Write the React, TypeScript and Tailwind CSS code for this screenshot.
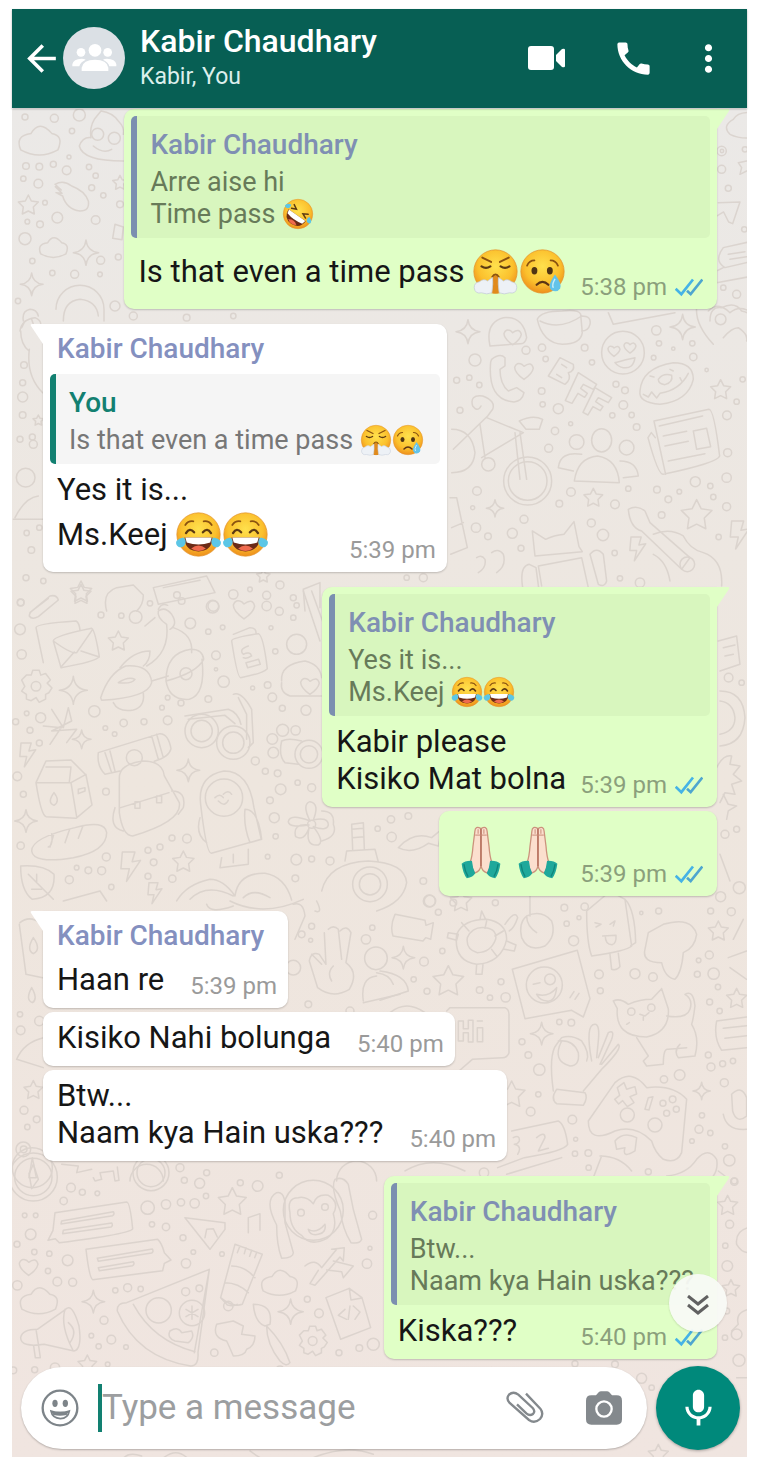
// src/App.tsx
import { ReactNode } from 'react';
import { MdArrowBack, MdCall, MdMic, MdMoreVert } from 'react-icons/md';

type EmojiName = 'rofl' | 'triumph' | 'cry' | 'joy';
type Point = [number, number, number];

interface Line {
  text: string;
  emojis?: EmojiName[];
}

interface Message {
  id: number;
  mine: boolean;
  tail?: boolean;
  sender?: string;
  quote?: { author: string; lines: Line[] };
  lines?: Line[];
  hands?: boolean;
  time: string;
}

const messages: Message[] = [
  {
    id: 1,
    mine: true,
    tail: true,
    quote: {
      author: 'Kabir Chaudhary',
      lines: [{ text: 'Arre aise hi' }, { text: 'Time pass', emojis: ['rofl'] }],
    },
    lines: [{ text: 'Is that even a time pass', emojis: ['triumph', 'cry'] }],
    time: '5:38 pm',
  },
  {
    id: 2,
    mine: false,
    tail: true,
    sender: 'Kabir Chaudhary',
    quote: {
      author: 'You',
      lines: [{ text: 'Is that even a time pass', emojis: ['triumph', 'cry'] }],
    },
    lines: [{ text: 'Yes it is...' }, { text: 'Ms.Keej', emojis: ['joy', 'joy'] }],
    time: '5:39 pm',
  },
  {
    id: 3,
    mine: true,
    tail: true,
    quote: {
      author: 'Kabir Chaudhary',
      lines: [{ text: 'Yes it is...' }, { text: 'Ms.Keej', emojis: ['joy', 'joy'] }],
    },
    lines: [{ text: 'Kabir please' }, { text: 'Kisiko Mat bolna' }],
    time: '5:39 pm',
  },
  { id: 4, mine: true, hands: true, time: '5:39 pm' },
  {
    id: 5,
    mine: false,
    tail: true,
    sender: 'Kabir Chaudhary',
    lines: [{ text: 'Haan re' }],
    time: '5:39 pm',
  },
  { id: 6, mine: false, lines: [{ text: 'Kisiko Nahi bolunga' }], time: '5:40 pm' },
  {
    id: 7,
    mine: false,
    lines: [{ text: 'Btw...' }, { text: 'Naam kya Hain uska???' }],
    time: '5:40 pm',
  },
  {
    id: 8,
    mine: true,
    tail: true,
    quote: {
      author: 'Kabir Chaudhary',
      lines: [{ text: 'Btw...' }, { text: 'Naam kya Hain uska???' }],
    },
    lines: [{ text: 'Kiska???' }],
    time: '5:40 pm',
  },
];

/* ---------- Emoji ---------- */

function JoyFeatures() {
  return (
    <>
      <path d="M14 19q4-6 11-5M50 19q-4-6-11-5" fill="none" stroke="#8a5210" strokeWidth="2.4" strokeLinecap="round" />
      <path d="M15 30q5-8 11-1M38 29q6-7 11 1" fill="none" stroke="#5d3a12" strokeWidth="3.2" strokeLinecap="round" />
      <path d="M13 36h38q0 18-19 19-19-1-19-19z" fill="#6b2a16" />
      <path d="M14 36h36l-2 7q-16 5-32 0z" fill="#fff" />
      <path d="M22 51q10-8 20 0-10 7-20 0z" fill="#ef6a4e" />
      <path d="M11 36q5 2 3 9-3 6-9 4-5-3-3-8 3-4 9-5zM53 36q-5 2-3 9 3 6 9 4 5-3 3-8-3-4-9-5z" fill="#5cc6e6" />
    </>
  );
}

function Emoji({ name, className }: { name: EmojiName; className: string }) {
  return (
    <svg viewBox="0 0 64 64" role="img" aria-label={name} className={className}>
      <defs>
        <radialGradient id="face" cx="50%" cy="38%" r="62%">
          <stop offset="0" stopColor="#ffe14d" />
          <stop offset="0.65" stopColor="#fbc02d" />
          <stop offset="1" stopColor="#ee8f1c" />
        </radialGradient>
      </defs>
      <circle cx="32" cy="32" r="29.5" fill="url(#face)" stroke="#e2932c" strokeWidth="1" />
      {name === 'joy' && <JoyFeatures />}
      {name === 'rofl' && (
        <g transform="rotate(35 32 32)">
          <path d="M15 21l9 5-9 4M49 21l-9 5 9 4" fill="none" stroke="#5d3a12" strokeWidth="3" strokeLinecap="round" />
          <path d="M11 35h42q-1 20-21 21-20-1-21-21z" fill="#6b2a16" />
          <path d="M12 35h40l-2 8q-18 5-36 0z" fill="#fff" />
          <path d="M22 52q10-8 20 0-10 7-20 0z" fill="#ef6a4e" />
          <path d="M10 24q3 6-1 10-5 3-8-1-1-6 9-9zM54 24q-3 6 1 10 5 3 8-1 1-6-9-9z" fill="#5cc6e6" />
        </g>
      )}
      {name === 'cry' && (
        <>
          <path d="M11 24q3-7 10-7M53 24q-3-7-10-7" fill="none" stroke="#8a5210" strokeWidth="2.4" strokeLinecap="round" />
          <ellipse cx="21" cy="31" rx="4" ry="5" fill="#4f3414" />
          <ellipse cx="42" cy="31" rx="4" ry="5" fill="#4f3414" />
          <path d="M24 50q8-8 16 0" fill="none" stroke="#5d3414" strokeWidth="3" strokeLinecap="round" />
          <path d="M49 36q10 13 7 19-4 6-11 3-8-5 4-22z" fill="#63c3ea" />
          <path d="M49 42q-5 9-2 12" fill="none" stroke="#c6edfa" strokeWidth="2" />
        </>
      )}
      {name === 'triumph' && (
        <>
          <path d="M14 13l12 6M50 13l-12 6" stroke="#8a5210" strokeWidth="2.6" strokeLinecap="round" />
          <path d="M13 25q6 4 12 0M39 25q6 4 12 0" fill="none" stroke="#5d3a12" strokeWidth="3" strokeLinecap="round" />
          <path d="M28 62V40q4-6 8 0v22z" fill="#e08a1c" />
          <path d="M27 40q5-8 10 0" fill="none" stroke="#8a5210" strokeWidth="2.4" />
          <path d="M28 40q1 8-1 21-7 3-14 0-9 2-10-7 0-7 7-8 6-5 11-1z" fill="#edf1f6" stroke="#c3cbd8" strokeWidth="1" />
          <path d="M36 40q-1 8 1 21 7 3 14 0 9 2 10-7 0-7-7-8-6-5-11-1z" fill="#edf1f6" stroke="#c3cbd8" strokeWidth="1" />
        </>
      )}
    </svg>
  );
}

function PrayingHands() {
  return (
    <svg viewBox="0 0 124 160" role="img" aria-label="folded hands" className="h-[53px] w-10">
      <path
        d="M62 6Q44-4 43 14L37 62Q35 92 28 112l14 32Q60 138 62 120z"
        fill="#fbdfce"
        stroke="#cb927c"
        strokeWidth="4"
      />
      <path
        d="M62 6Q80-4 81 14L87 62Q89 92 96 112l-14 32Q64 138 62 120z"
        fill="#fbdfce"
        stroke="#cb927c"
        strokeWidth="4"
      />
      <path d="M62 6v116" stroke="#b26a58" strokeWidth="4" />
      <path d="M44 26h36M53 8v14M71 8v14" stroke="#c98b76" strokeWidth="3" />
      <path d="M2 115q10-10 32-9 2 22 10 38-6 12-26 16Q6 146 2 115z" fill="#1fa89b" />
      <path d="M122 115q-10-10-32-9-2 22-10 38 6 12 26 16 12-14 16-45z" fill="#1fa89b" />
      <path d="M9 116q3 22 13 39M115 116q-3 22-13 39" fill="none" stroke="#0f857a" strokeWidth="4" />
    </svg>
  );
}

/* ---------- Wallpaper ---------- */

// Each tile is drawn at three times its size
function Tile({ x, y, children }: { x: number; y: number; children: ReactNode }) {
  return <g transform={`translate(${x} ${y}) scale(0.3333)`}>{children}</g>;
}

function Dots({ at }: { at: Point[] }) {
  return (
    <>
      {at.map(([x, y, r]) => (
        <circle key={`${x}-${y}`} cx={x} cy={y} r={r} />
      ))}
    </>
  );
}

function Shapes({ d, at }: { d: string; at: Point[] }) {
  return (
    <>
      {at.map(([x, y, s]) => (
        <path
          key={`${x}-${y}`}
          d={d}
          strokeWidth="1.5"
          vectorEffect="non-scaling-stroke"
          transform={`translate(${x} ${y}) scale(${s / 10})`}
        />
      ))}
    </>
  );
}

const STAR = 'M0-10L3-4 10-3 5 2 6 9 0 6-6 9-5 2-10-3-3-4z';
const SPARKLE = 'M0-10Q1-1 10 0 1 1 0 10-1 1-10 0-1-1 0-10z';
const HEART = 'M0 9Q-10 2-10-4-8-10-2-7L0-5Q8-11 10-3 9 3 0 9z';
const CLOUD = 'M-9 4Q-12-3-4-4 0-11 6-4 12-3 9 4 0 9-9 4z';
const BOLT = 'M-5-10H4L2-3 8-4-2 11 0 2-6 2z';
const GEAR =
  'M-2-10H2L3-7 6-8 9-4 7-2 10 1 8 4 6 5 6 8 2 10 0 7-3 9-6 8-6 5-9 3-7 0-9-4-6-7-3-7zM3 0A3 3 0 1 1-3 0A3 3 0 1 1 3 0';

function Wallpaper() {
  return (
    <svg
      viewBox="12 108 735 1350"
      preserveAspectRatio="xMinYMin slice"
      aria-hidden="true"
      className="absolute inset-0 h-full w-full fill-none stroke-[#d6cec8] opacity-75"
      strokeWidth="4.5"
      strokeLinejoin="round"
      strokeLinecap="round"
    >
      <Tile x={0} y={0}>
        <Shapes d={CLOUD} at={[[118, 422, 62], [160, 742, 42]]} />
        <Shapes d={STAR} at={[[85, 612, 30], [360, 545, 22]]} />
        <Shapes d={SPARKLE} at={[[258, 755, 38], [95, 850, 34]]} />
        <path d="M238 435q10-28 35-25-5-30 10-55l20-25q35 5 52 30 20 20 15 40M238 435q10 45 132 45" />
        <circle cx="293" cy="400" r="18" />
        <circle cx="343" cy="412" r="18" />
        <path d="M280 435q30 25 55 10M165 550q25-15 50 5 40 15 50 45 5 30-25 30-40-5-52-45l-20-10 18 2-20-20 18 10z" />
        <path d="M345 670l25 8-4 38-28-4zM168 925a72 72 0 0 1 144 0v35M190 960q0-60 50-65 50 5 55 50M70 960q-5-30 20-35 20 0 25 20" />
        <Dots
          at={[
            [75, 348, 9], [163, 352, 12], [238, 342, 18], [216, 390, 8], [78, 495, 10], [118, 497, 10], [160, 490, 9],
            [200, 508, 13], [207, 468, 6], [267, 498, 8], [287, 524, 8], [70, 533, 8], [115, 548, 13], [275, 560, 9],
            [310, 583, 8], [172, 650, 16], [287, 657, 13], [82, 662, 7], [120, 670, 10], [75, 713, 18], [97, 780, 8],
            [157, 816, 8], [224, 820, 12], [302, 778, 12], [300, 820, 7], [355, 768, 9], [345, 915, 15], [54, 900, 8],
            [135, 605, 7], [360, 610, 10],
          ]}
        />
      </Tile>

      <Tile x={400} y={0}>
        <path d="M1060 335q-45-5-60 20-35 20-10 45 30 15 70 10M955 605l65-2-22 65-12-5-15-30-20 12M1060 720l-90 20q-30 40 5 60l85-20M985 760l50-8M990 775l50-8M970 800l-20 10v35l110-20M1040 480l-25 5 10 15-5 20 20-10" />
        <path d="M930 960q0-45 35-40 40-20 60 10 30 5 30 30" />
        <Dots
          at={[[965, 450, 14], [966, 450, 5], [1035, 445, 8], [965, 505, 12], [985, 562, 9], [1033, 685, 8], [970, 860, 8], [1010, 880, 12]]}
        />
      </Tile>

      <Tile x={0} y={310}>
        <path d="M60 60q5-35 45-40 25 10 15 35M62 60q0 40 25 60M75 30l-10 20M95 25l5 15M88 115q-10 80 40 130M45 620q30-60 70-65M40 625h90" />
        <circle cx="77" cy="500" r="28" />
        <path d="M460 830l160-35 25 50-170 35zM490 830l110-22M320 900q-15-55 30-70l50-8 30 30q0 30-20 48M915 900l-5-65 50-20v75" />
        <Shapes d={STAR} at={[[243, 842, 32], [790, 795, 20], [115, 328, 16]]} />
        <Dots
          at={[
            [72, 162, 10], [68, 215, 9], [68, 258, 15], [68, 312, 10], [60, 385, 9], [97, 378, 9], [100, 400, 12],
            [80, 666, 8], [118, 650, 8], [94, 717, 10], [78, 800, 9], [130, 810, 8], [62, 874, 10], [545, 870, 10],
            [640, 885, 16], [700, 850, 14], [750, 835, 7], [800, 885, 14], [840, 822, 12], [880, 860, 9], [400, 15, 12],
            [560, 20, 10], [700, 15, 8],
          ]}
        />
      </Tile>

      <Tile x={380} y={300}>
        <Shapes d={SPARKLE} at={[[264, 92, 36], [908, 78, 38], [345, 622, 26]]} />
        <Shapes d={HEART} at={[[398, 108, 26], [432, 210, 28], [702, 150, 18], [750, 140, 18]]} />
        <Shapes d={STAR} at={[[1022, 266, 30], [950, 642, 46], [640, 590, 28]]} />
        <Shapes d={BOLT} at={[[770, 742, 34], [1075, 700, 40]]} />
        <path d="M330 135q-15-70 40-85 60-5 70 60-5 20-20 18zM472 55q10-25 75-25 50-5 55 10l5 55q-5 35-60 35-60-5-75-75zM605 45q30 0 25 25-5 20-25 20M480 60q60 30 125-15M685 35l15 35 185-35" />
        <circle cx="729" cy="155" r="64" />
        <path d="M705 185q35-10 60-15-5 35-35 30-15-2-25-15M335 175q25-20 40-5v25l-15 10q0 45 25 65l25-10 22 15q-5 25-30 28-80-5-70-120z" />
        <path d="M540 170l40 20q5 20-15 25 10 20-10 35l-50-25zM545 190l15 10M530 220l15 10M595 215l55 35-10 15-30-15-8 12 20 15-8 12-20-12-18 30-20-8zM645 260l50 30-10 15-30-15-8 12 22 15-8 12-22-12-15 25-15-8z" />
        <path d="M780 270q5-70 100-85 60 0 60 50-15 65-100 75-65-5-60-40zM790 280l15 8 10-15 15 18 10-14q60-10 85-60M835 235q15-20 40-12 5 20-20 28-20-2-20-16zM810 225l12 3M870 205l10 5M900 230l5 10" />
        <path d="M278 315q-10-35 30-30 40 15 30 40l-15 20-103 100M278 315q15 20 25 0M320 350l110 45-125 75M300 370l15 100M418 360q40-20 70-5l-10 30h-40zM420 395l20 140M405 395l15 140M215 385q60 0 70 70-5 60-70 60" />
        <circle cx="443" cy="540" r="72" />
        <circle cx="443" cy="540" r="58" />
        <circle cx="325" cy="490" r="20" />
        <ellipse cx="665" cy="418" rx="30" ry="35" />
        <circle cx="590" cy="423" r="22" />
        <circle cx="740" cy="440" r="22" />
        <path d="M583 540q10-70 70-75 60 10 65 80zM605 460q-65-10-70 40l45 10M720 480q50 0 55 45l-45 5M822 360l165-35q15 0 32 140-5 20-170 55-15 0-45-110l10-15 12 15M822 360l35 160M838 375l130-30M940 390l40-8 12 55-42 8zM850 405l70-14M855 435l70-14M865 480l110-22" />
        <path d="M465 765l-8-75 40 25q25-12 55-15l30-38 15 75 10 15zM475 795l130-25 20 90M475 795l10 60M428 860q-10-65 20-70l20 10 8 60M630 760q20-25 40 0l10 80q-5 20-25 10zM745 625q25-15 50 5l15 35 120 105-25 35-120-115q-35-10-40-65zM820 700q50-20 90 5 20 40 60 50 60 20 55 100M820 760q40 20 50 80" />
        <circle cx="922" cy="790" r="22" />
        <path d="M290 770q15-10 25 5 5 25-20 40M335 755q20-15 35 5 10 35-20 55M210 590h20l32 150-50 20M215 680l35-15M950 20q-5 50 50 110M985 30q30-30 65 5 30-25 65 0M1030 110q25-30 45-30 30 20 25 40" />
        <circle cx="1022" cy="55" r="16" />
        <Dots
          at={[
            [438, 148, 12], [486, 140, 11], [285, 177, 18], [230, 238, 9], [268, 230, 8], [298, 252, 8], [497, 174, 8],
            [614, 140, 10], [636, 184, 8], [829, 88, 14], [837, 127, 8], [880, 143, 5], [937, 127, 8], [821, 170, 7],
            [940, 168, 11], [708, 250, 9], [735, 268, 10], [730, 312, 13], [485, 270, 10], [488, 310, 8], [535, 323, 15],
            [697, 343, 8], [755, 342, 8], [1041, 343, 13], [1070, 302, 8], [770, 378, 10], [525, 390, 11], [572, 368, 6],
            [506, 442, 12], [240, 328, 9], [291, 570, 13], [278, 620, 6], [432, 655, 12], [288, 680, 14], [324, 706, 10],
            [397, 697, 15], [423, 742, 9], [538, 608, 10], [573, 573, 13], [705, 610, 13], [634, 666, 12], [669, 702, 17],
            [745, 563, 8], [845, 642, 10], [865, 595, 10], [831, 566, 10], [898, 572, 7], [946, 542, 15], [991, 555, 8],
            [1000, 588, 8], [1040, 617, 12], [1016, 708, 8], [704, 756, 8], [1040, 530, 14], [1043, 455, 12],
            [720, 832, 8], [780, 845, 14], [130, 830, 12], [80, 830, 8], [1088, 235, 8], [980, 207, 5],
          ]}
        />
      </Tile>

      <Tile x={0} y={590}>
        <Shapes d={STAR} at={[[355, 150, 30], [550, 812, 32], [243, 10, 30]]} />
        <Shapes d={SPARKLE} at={[[220, 298, 42], [245, 445, 28], [565, 538, 34], [78, 690, 34]]} />
        <Shapes d={HEART} at={[[732, 55, 32], [930, 285, 28]]} />
        <Shapes d={GEAR} at={[[108, 286, 48]]} />
        <Shapes d={BOLT} at={[[80, 490, 34], [388, 825, 42], [462, 905, 30]]} />
        <path d="M90 65l60-50q20-5 25 12l-60 50q-20 10-27-2 0-10 12-18l45-35M130 215l-22-105q0-12 120-20 10 5 12 28M160 150q0-15 115-38 10 5 23 85-10 15-115 33zM160 150q55 40 70 35l48-70M183 228l40-45M298 198l-55-18" />
        <path d="M302 320q25-75 75-95 75-5 78 50-10 45-150 53zM360 230q40-50 90-50 0 30-20 45M355 275q30-20 50-10-10 15-50 10M340 335q15 30 60 22 35-10 30-50M455 270l50-15M440 225q70-40 60-125-30-20-25-40 20-15 40 10 20 30-5 45M520 110q60 20 55 75M498 270q0-85 75-95 35 0 38 30-20 40-113 65zM498 270q10 60 70 55 50-15 38-120M435 105l30-25M475 55q10-20 28-12" />
        <circle cx="558" cy="248" r="18" />
        <path d="M695 150q0-10 80-22 15 5 27 105-15 15-80 27-10 0-27-110zM700 130l50-20q20 0 18 18M745 165q-30 10-15 25 20-10 25 5-15 10-25 5M738 215l38-10 5 15-38 10z" />
        <path d="M845 270q-5-50 70-60 45 10 50 50M845 275q-5 30 25 40h95M910 0l50 150M935 0l40 110" />
        <circle cx="605" cy="420" r="50" />
        <circle cx="605" cy="420" r="32" />
        <circle cx="700" cy="455" r="50" />
        <circle cx="700" cy="455" r="32" />
        <path d="M555 375l130-20q30 10 38 45M565 385l110-12 30 25M700 310q25-10 55 45l5 100-15 15M715 320l25 50v75M155 355l35 55 15-60 10 40-60 30 75-5-30 40M130 405l55 5M150 460l30-45" />
        <path d="M108 575l30-65 75-3 45 45 18 90-48 40-90-5q-15-5-30-102zM108 575h105l17 103M213 575l45-25M138 528h75l-5 45M162 605q20 25 0 38-22-8 0-38zM235 595l20-5v10l-20 8z" />
        <path d="M295 485l185-57q25 0 33 45-5 25-50 38M295 485q-5 40 20 65l45-10M315 485l20 60M330 480l15 60M455 435l20 70M470 430l20 70M358 560q0-40 70-50 60 0 65 45l45 80q10 55-140 100-30 0-40-70zM362 650l145-45M345 650q-20 60 25 70M515 600q45 0 35 50l-15 20M405 632h15v20h-15zM470 615h15v20h-15z" />
        <circle cx="403" cy="500" r="24" />
        <path d="M602 640q-10-85 70-100 75 0 90 110l22 95-150 42q-15 0-32-147zM600 680q-15 50 20 75M735 655q40 0 50 90l-35 10q-20-50-15-100zM665 800l-5 30 85-10v-45M700 790v25M645 620q15-15 25 0M670 610q15-15 25 0M655 630q20 20 30-2" />
        <circle cx="672" cy="620" r="56" />
        <path d="M95 780q0-40 130-70 90-25 95 15 0 55-100 75-120 20-125-20zM150 768l12-40M195 755l14-40M235 742l14-38M145 768q15-5 10-40M62 825q70-5 100 25 5 70-65 75-35-25-35-100zM85 850l75 75M110 875v-25M95 895h30M190 930l110-30 20 30M530 930q30-50 100-65 40 0 75 50 10-70 90-68 60 10 80 80M570 925q50-50 130-10M730 920q30-30 80 0" />
        <path d="M930 690q-25-50 0-58 30 5 10 55 45-10 45 15-5 20-45 5 35 45 15 55-40 5-28-50-15 40-40 25-10-40 40-35-60 10-62-10 5-25 65-2zM845 450q20-10 60 0M845 450q-10 45 10 65l40 5" />
        <circle cx="927" cy="490" r="42" />
        <circle cx="927" cy="490" r="26" />
        <Dots
          at={[
            [62, 35, 10], [60, 115, 16], [65, 190, 14], [303, 72, 9], [364, 74, 8], [407, 78, 19], [283, 361, 17],
            [122, 380, 15], [80, 367, 7], [47, 392, 9], [90, 418, 9], [118, 456, 9], [316, 411, 7], [344, 429, 7],
            [371, 396, 11], [432, 392, 9], [503, 388, 13], [503, 320, 7], [543, 336, 9], [486, 350, 7], [625, 324, 10],
            [571, 97, 16], [450, 37, 8], [531, 12, 10], [638, 47, 19], [625, 122, 8], [668, 109, 7], [648, 193, 13],
            [648, 235, 5], [671, 272, 17], [758, 291, 6], [803, 282, 10], [817, 319, 13], [847, 352, 9], [918, 358, 15],
            [800, 13, 12], [838, 61, 12], [880, 80, 8], [890, 43, 8], [826, 181, 8], [890, 160, 30], [848, 418, 18],
            [887, 418, 14], [817, 444, 16], [820, 485, 16], [766, 510, 12], [796, 541, 9], [833, 547, 10], [842, 595, 16],
            [893, 575, 8], [935, 590, 12], [810, 628, 10], [823, 680, 15], [827, 736, 8], [889, 806, 16], [935, 804, 9],
            [886, 862, 10], [803, 797, 7], [70, 610, 9], [318, 602, 10], [62, 764, 11], [208, 866, 12], [230, 830, 7],
            [265, 838, 10], [305, 839, 12], [319, 798, 12], [334, 888, 8], [444, 778, 9], [480, 768, 9], [461, 814, 10],
            [444, 856, 9], [516, 741, 9], [561, 743, 13], [517, 863, 11], [52, 556, 13], [935, 700, 12], [813, 110, 6],
          ]}
        />
      </Tile>

      <Tile x={320} y={580}>
        <path d="M1195 180l55-15 10 85-60 20M1210 200l35-8M1215 225l25-5M1200 330q70 0 75 80-5 80-75 85M1200 360q40 5 45 50 0 40-45 50M1190 560q20-40 45-35l-5 25 30 5-20 25 25 20-30 10 10 30-30-5-15 30" />
        <circle cx="150" cy="910" r="52" />
        <circle cx="150" cy="910" r="32" />
        <path d="M5 930q20-85 140-90 110 5 115 65-10 60-90 85M75 840l5-30 85-5 10 38M98 805l-3-75 35-5 3 78M95 745l35-3M97 770l35-3M235 800q45-50 100-30l30-25-10 50-30-8q-50 35-90 13zM5 690q40 0 35 40 15 35-35 50M1200 820l30 80M1210 640l15 30 25 5-25 15-5 25" />
        <Dots
          at={[[30, 840, 12], [215, 768, 14], [173, 743, 8], [213, 715, 11], [328, 960, 18], [310, 900, 10], [1226, 290, 13], [1265, 305, 8], [1258, 920, 18], [1250, 745, 9], [1215, 760, 12], [400, 965, 10], [265, 705, 10]]}
        />
      </Tile>

      <Tile x={0} y={900}>
        <path d="M60 65q30-25 65 5M58 70l20 150 50 10M100 110q25 35 0 48-22-12 0-48zM985 85q15-15 30 0l10 90M1020 90q20-20 33 5l-15 90q40 30 10 80-50 30-95-5l-25-80q5-30 30-20l20 30-5-95M935 160l30 30M1000 195q-20 20-5 45M1090 300q-10-70 40-75M1130 215q40 5 50 35M1090 305l110-25M50 475q20-50 80-65M50 475l80 25M95 260q20 35 2 45-22-8-2-45zM880 10q30-10 35 35l-30 70M620 10q10 30 80 5M690 0q100 50 220-5M950 0q20 40-5 30" />
        <circle cx="1128" cy="172" r="34" />
        <circle cx="97" cy="800" r="60" />
        <path d="M97 770l12 60h-22zM185 790l50 5-5 20 45-10M390 840a50 50 0 0 1 100 0M1010 840a60 60 0 0 1 120 0" />
        <Shapes d={STAR} at={[[100, 567, 28]]} />
        <Dots
          at={[
            [62, 388, 13], [60, 340, 8], [118, 360, 14], [72, 628, 12], [82, 678, 8], [110, 655, 10], [70, 745, 22],
            [71, 745, 10], [905, 100, 10], [935, 76, 9], [932, 118, 6], [1117, 80, 8], [1098, 115, 14], [925, 310, 10],
            [1050, 330, 12], [880, 200, 22], [540, 800, 12], [620, 815, 9],
          ]}
        />
      </Tile>

      <Tile x={380} y={890}>
        <Shapes d={STAR} at={[[205, 270, 46], [1015, 120, 30], [1070, 322, 30], [243, 30, 32], [395, 610, 40]]} />
        <Shapes d={SPARKLE} at={[[70, 200, 34], [485, 428, 34], [965, 600, 26]]} />
        <path d="M45 70l90 18 3 15 22-8-8 50-15-5-8 10-90-15q-10-30 6-65zM230 130q20-45 90-45 60 10 60 60-15 70-90 75-70-10-60-90zM262 140q15-35 55-30 35 5 30 35-15 40-55 40-35-10-30-45zM300 85l5-25 12 25M375 100q30-45 38-20-10 30-25 40M205 125l30 5-5 18-28-8zM290 220l-2 30h18l3-30M380 150l28 12-5 18-30-5M245 95l22 25M320 90l-5 22M370 120l-25 15M350 195l-15-20" />
        <path d="M440 75q-25 20-15 65 20 45 70 25 35-30 20-75-30-35-75-15 0 30 30 50M450 0v75M620 60q60-50 70-60l45 25 20 140q-15 15-120 30-15-40-15-135zM735 25q30 30 32 130l-15 10M690 190l5 45q15 5 25-8l-5-40M645 95l18 5-15 8M690 100l15-10-5 15M668 135l40-2q2 25-12 28-20 0-20-26" />
        <path d="M397 235l195-57 38 145-20 55-35-20-140 25zM460 280l20-5M470 310q35 10 60-20-5 45-30 40-20-2-30-20M570 320l12-18M585 325l12-18" />
        <circle cx="493" cy="282" r="54" />
        <circle cx="510" cy="265" r="16" />
        <path d="M805 125l45-25q85-25 100 30-5 40-40 55-5 60-25 80-30-5-40-50-60 0-50-40zM1060 145l30-60M1045 200l55-20M1050 230l50 35" />
        <path d="M700 330q20-10 45 10 35-15 70-15l30-32 20 60q5 70-65 85-95 0-88-85zM860 375q60 10 70-20 10-30-15-45 25-15 30 35-5 40-10 55 25 40 10 95l-50 5q-15-20 5-40M770 440l35 55-15 15 10 15 50-5q0-50 15-45l55-5M780 370l15 5 12-10M790 378v10M740 400l8-5" />
        <circle cx="754" cy="362" r="11" />
        <circle cx="814" cy="350" r="11" />
        <path d="M200 360l10-10h165q12 5 12 20v115q-5 15-20 15l-90 5-40 35M235 390v60h15v-25h15v28h14v-65h-14v25h-15v-23zM292 410h16v42h-16zM292 390h15" />
        <path d="M520 600q-15-110 10-140l15-20q30-10 60 10 25 35 15 60M545 450q-30 60 25 75 30 0 25-40-15-40-60-35M635 510q-20-110 10-110 15 0 10 50l-5 50M655 500l30-75q20-10 10 20l-35 75M665 520l50-60q15 10-50 75L610 600M530 595l85 10q10 15-5 38l-80-5q-20-15 0-43z" />
        <path d="M625 690l80-115q50-45 95 15 80-10 120 35l-15 160q-15 35-55 20-25-20-35-55-50-50-110-30-80 40-80-30zM712 590l20-15 8 20 25-8 5 22-20 8 12 18-20 12-14-18-12 10-12-14 15-12zM795 655l10-35 14-3-12 40z" />
        <circle cx="742" cy="672" r="21" />
        <circle cx="825" cy="702" r="21" />
        <path d="M395 720l140-30q20 10 28 70-10 20-130 40l-80 30M470 740q25-20 25 0l-20 40 30-8M380 850l165-50M400 740q20-10 18 10-5 10-15 10 25 5 10 30M705 750q25-30 65-10l-5 40q-40 25-30-10l-25 5zM660 795q60 0 95 45M640 860l25-65M860 855q60-5 90-50 35-40 60 0 5 30-10 50M1010 390l90-12M1010 390q-10 50 15 88l75-8M1030 412l70-8M1035 442l65-8M1055 610q30-30 45 10v55q-30 25-42-15zM1030 670q10 50 70 45M0 240q80 10 85 60l-85 28M30 365q50-40 105 0M75 840q80-50 180 0" />
        <Dots
          at={[
            [150, 30, 17], [175, 64, 9], [346, 35, 9], [187, 180, 8], [132, 212, 13], [101, 265, 8], [141, 301, 9],
            [299, 297, 10], [330, 320, 8], [377, 319, 14], [363, 272, 9], [553, 50, 10], [614, 47, 11], [560, 98, 8],
            [597, 80, 6], [581, 149, 15], [657, 250, 13], [661, 299, 9], [765, 248, 15], [819, 258, 13], [988, 192, 12],
            [956, 208, 7], [952, 250, 9], [1001, 248, 17], [1014, 288, 8], [989, 333, 9], [1019, 360, 8], [836, 60, 9],
            [784, 66, 5], [992, 60, 9], [1054, 62, 12], [1022, 17, 15], [538, 393, 8], [574, 395, 10], [426, 452, 9],
            [445, 492, 10], [478, 536, 17], [475, 610, 8], [452, 662, 13], [577, 686, 13], [587, 745, 6], [585, 788, 8],
            [625, 786, 10], [626, 830, 8], [852, 565, 11], [899, 552, 16], [849, 637, 9], [878, 625, 10], [860, 667, 9],
            [889, 655, 9], [985, 492, 9], [993, 528, 12], [1028, 518, 9], [1059, 510, 8], [1033, 575, 12], [966, 673, 8],
            [957, 715, 12], [991, 726, 8], [936, 750, 7], [1035, 766, 8], [1048, 808, 17], [805, 842, 9], [1063, 872, 11],
            [312, 845, 14],
          ]}
        />
      </Tile>

      <Tile x={0} y={1170}>
        <circle cx="100" cy="18" r="72" />
        <circle cx="100" cy="18" r="56" />
        <circle cx="453" cy="5" r="54" />
        <circle cx="453" cy="5" r="42" />
        <Shapes d={STAR} at={[[697, 92, 42], [262, 580, 28]]} />
        <Shapes d={SPARKLE} at={[[280, 392, 34], [872, 422, 38]]} />
        <Shapes d={HEART} at={[[86, 288, 28]]} />
        <Shapes d={CLOUD} at={[[116, 392, 56], [838, 338, 54]]} />
        <Shapes d={GEAR} at={[[938, 510, 44]]} />
        <path d="M100-20l15 45-20 28-8-45zM280 20l5 10 20-5-5-20 40-5 5 30 12-2-5-40M165 125l215-32q10 0 18 80-5 15-220 42l-12-12-22 5 15-30zM185 150l155-28q5 8-2 12l-155 25zM190 178l145-22q5 8-2 12l-145 20zM258 235l215-30q12 10 20 40l20 22-20 10-5 22-210 27q-10-5-20-91zM292 262l165-28q5 8-2 12l-160 25zM295 290l105-18q5 8-2 12l-100 15z" />
        <path d="M628 295L380 395q-30 0-28 25 60 140 220 165 25 0 22-40zM400 400q60 110 185 142M628 295l-45 250M510 480q25-15 35 5l30-5q10 20-10 35l-40-5q-25-10-15-30" />
        <circle cx="476" cy="418" r="38" />
        <circle cx="576" cy="426" r="38" />
        <path d="M576 405v40M558 415l36 22M558 437l36-22M555 140l120 15v20l-45 60zM615 200l5-25 20-2 12 25M745 185v-45l35-12v50" />
        <path d="M705 220l82 30-60 150q-30 10-65-20zM720 225l-8 20M738 230l-5 18M755 238l-6 18M770 245l-6 15M695 285q40 0 70 35M675 335q40 0 70 30M662 380l20 22q20 5 30-2" />
        <circle cx="685" cy="405" r="14" />
        <path d="M650 460l50-10 30 15-5 25 40 5q0 30-25 40-5 20-40 20-15-35-20-45-45-10-30-50zM760 400q60 0 50 60l-15 5q-30-10-35-65zM800 465q50 50 70 110-10 15-30-5-40-50-40-105M978 380l70-28 38 28 26 90-90 35zM1048 352l5 35 33-6M1035 415l-20 18 25 12M1060 405l20 18-15 22M1050 405l-5 40" />
        <path d="M62 500q5-25 50-25l85-60q20-20 40 50 10 70-15 75l-90-20q-70 10-70-20zM108 475l8 50 5 35h-15l-5-35M195 415q-15 50 25 125M205 455q30 25 5 60" />
        <circle cx="940" cy="118" r="90" />
        <path d="M870 125q-10-45 25-45 25-5 45 18 10-30 45-25 35 20 15 55 15 50-20 75-50 25-75-10-35-20-35-68zM925 175q25 15 50-15 5 25-20 30-25 5-30-15zM830 65q20-5 25 30v60l25 90q0 15-35 17-15-40-15-100-40-75 0-97zM1005 25q25-10 40 15l15 75 25 90q-5 15-32 10-25-40-32-95-30-70-16-95zM915 285q30-25 50 5l45-55-15 0 38-5-3 40-10-12-75 85-15-5 25-40M1000 270l60 15-30 35-5-18-45-5" />
        <circle cx="903" cy="125" r="10" />
        <circle cx="975" cy="108" r="10" />
        <path d="M365 870q15-30 60-15M480 870q50-50 90 0M750 840q40 30 60 30M940 860q100-40 180-10" />
        <Dots
          at={[
            [213, 50, 13], [247, 64, 9], [292, 67, 7], [191, 90, 11], [74, 133, 7], [107, 133, 7], [92, 190, 16],
            [51, 220, 9], [103, 243, 8], [148, 248, 8], [203, 268, 16], [144, 300, 8], [172, 332, 13], [218, 334, 12],
            [52, 343, 14], [346, 358, 8], [383, 350, 12], [422, 354, 8], [443, 110, 20], [498, 100, 14], [543, 94, 11],
            [584, 97, 14], [553, 28, 9], [599, 37, 15], [618, 75, 8], [456, 160, 8], [498, 168, 11], [549, 200, 9],
            [558, 277, 14], [580, 243, 7], [666, 249, 7], [721, 35, 9], [773, 45, 16], [838, 13, 9], [312, 448, 12],
            [274, 494, 7], [334, 506, 13], [296, 526, 8], [378, 528, 7], [557, 362, 12], [598, 352, 10], [922, 385, 9],
            [957, 427, 13], [1017, 545, 9], [1078, 531, 10], [1120, 520, 18], [643, 545, 11], [1101, 278, 14],
            [1118, 133, 12], [1110, 232, 6], [104, 596, 9], [165, 590, 14], [323, 580, 7], [840, 595, 10], [40, 598, 10],
          ]}
        />
      </Tile>

      <Tile x={375} y={1170}>
        <Shapes d={STAR} at={[[1058, 103, 30], [1068, 352, 26], [850, 850, 30]]} />
        <path d="M1120 170q-40 10-35 50 15 25 35 25M1120 415q-40 10-30 45l-20 20M1030 0l20 15M1085 620h30M350 590l30 15" />
        <Dots
          at={[
            [1078, 30, 9], [1064, 160, 12], [1051, 224, 8], [1057, 285, 16], [1055, 420, 9], [1085, 490, 16],
            [1050, 500, 8], [1092, 568, 18], [800, 622, 15], [830, 650, 8], [600, 578, 9], [720, 580, 10],
          ]}
        />
      </Tile>
    </svg>
  );
}

/* ---------- Messages ---------- */

function Ticks() {
  return (
    <svg viewBox="0 0 84 56" role="img" aria-label="Read" className="h-[19px] w-7 fill-none" strokeWidth="8">
      <path d="M2 32l17 16L54 4" stroke="#45b3e6" />
      <path d="M36 38l11 10L82 4" stroke="#4ea6cf" />
    </svg>
  );
}

function TextLine({ line, small }: { line: Line; small?: boolean }) {
  const tall = line.emojis && !small;
  return (
    <p className={small ? 'leading-8' : tall ? 'leading-[54px]' : 'leading-[37px]'}>
      {line.text}
      {line.emojis && ' '}
      {line.emojis?.map((name, i) => (
        <Emoji
          key={i}
          name={name}
          className={small ? 'inline-block size-8 align-[-7px]' : 'inline-block size-[47px] align-[-13px]'}
        />
      ))}
    </p>
  );
}

function Bubble({ message, first }: { message: Message; first: boolean }) {
  const { mine, tail, sender, quote, lines, hands, time } = message;

  return (
    <li className={`flex ${mine ? 'justify-end' : 'justify-start'} ${first ? 'mt-px' : tail ? 'mt-[15px]' : 'mt-1'}`}>
      <article
        className={`relative rounded-[10px] px-[7px] pt-[7px] pb-[10px] shadow-[0_1px_2px_rgba(0,0,0,0.2)] ${
          mine ? 'bg-[#e0ffc6]' : 'bg-white'
        } ${tail ? (mine ? 'rounded-tr-none' : 'rounded-tl-none') : ''}`}
      >
        {tail && (
          <svg
            viewBox="0 0 13 20"
            aria-hidden="true"
            className={`absolute top-0 h-5 w-[13px] ${mine ? 'left-full fill-[#e0ffc6]' : 'right-full -scale-x-100 fill-white'}`}
          >
            <path d="M0 0H11Q13 0 12 2L0 20z" />
          </svg>
        )}

        {sender && <h2 className="mb-[7px] px-[7px] text-[28px] leading-9 font-medium text-[#8490bf]">{sender}</h2>}

        {quote && (
          <blockquote
            className={`mb-[7px] rounded-[5px] border-l-[6px] pt-[11px] pr-4 pb-2 pl-[13px] text-[27px] ${
              mine
                ? 'border-[#7b8fb0] bg-[#d8f6be] text-[#677a59]'
                : 'border-[#128071] bg-[#f5f5f5] text-[#777777]'
            }`}
          >
            <cite
              className={`mb-[3px] block text-[28px] leading-9 font-medium not-italic ${mine ? 'text-[#7f8fb3]' : 'text-[#128071]'}`}
            >
              {quote.author}
            </cite>
            {quote.lines.map((line) => (
              <TextLine key={line.text} line={line} small />
            ))}
          </blockquote>
        )}

        <div className={`flex items-end justify-between pl-[7px] ${mine ? 'gap-[14px] pr-[7px]' : 'gap-[26px] pr-1'}`}>
          {hands ? (
            <div className="flex gap-[17px] px-2 pt-2 pb-[7px]">
              <PrayingHands />
              <PrayingHands />
            </div>
          ) : (
            <div className="text-[31px] text-[#161616]">
              {lines?.map((line) => (
                <TextLine key={line.text} line={line} />
              ))}
            </div>
          )}
          <div className="flex items-center gap-2">
            <time className={`text-2xl leading-6 whitespace-nowrap ${mine ? 'text-[#8b9f7c]' : 'text-[#9a9a9a]'}`}>
              {time}
            </time>
            {mine && <Ticks />}
          </div>
        </div>
      </article>
    </li>
  );
}

/* ---------- Header and composer ---------- */

function Header() {
  return (
    <header className="relative z-10 flex items-center bg-[#075f54] pt-[13px] pr-[17px] pb-[14px] pl-2 text-white shadow-[0_1px_2px_rgba(0,0,0,0.3)]">
      <button aria-label="Back" className="shrink-0">
        <MdArrowBack className="size-[43px]" />
      </button>
      <svg viewBox="0 0 186 186" role="img" aria-label="Group photo" className="size-[62px] shrink-0">
        <circle cx="93" cy="93" r="93" fill="#dbe0e5" />
        <g fill="#fff">
          <circle cx="96" cy="70" r="19" />
          <circle cx="54" cy="76" r="13" />
          <circle cx="134" cy="76" r="13" />
          <path d="M56 132v-10q4-24 40-24t40 24v10z" />
          <path d="M28 118v-6q3-16 28-17 8 0 12 3-17 8-19 20z" />
          <path d="M160 118v-6q-3-16-28-17-8 0-12 3 17 8 19 20z" />
        </g>
      </svg>
      <div className="min-w-0 flex-1 pl-[15px]">
        <h1 className="truncate text-[32px] leading-[38px] font-medium">Kabir Chaudhary</h1>
        <p className="truncate text-[23px] leading-[34px] text-[#dcefec]">Kabir, You</p>
      </div>
      <nav className="flex items-center">
        <button aria-label="Video call" className="mr-[47px]">
          <svg viewBox="0 0 37 24" className="h-6 w-[37px] fill-current">
            <rect width="26" height="24" rx="3" />
            <path d="M28 9l6-6q3-1 3 1v16q0 2-3 1l-6-6z" />
          </svg>
        </button>
        <button aria-label="Call" className="mr-8">
          <MdCall className="size-[43px]" />
        </button>
        <button aria-label="More options">
          <MdMoreVert className="size-[43px]" />
        </button>
      </nav>
    </header>
  );
}

function Composer() {
  return (
    <form className="relative flex items-center gap-[9px] pt-[7px] pr-[7px] pb-[7px] pl-[9px]" onSubmit={(e) => e.preventDefault()}>
      <div className="flex h-[82px] min-w-0 flex-1 items-center rounded-full bg-white pr-[25px] pl-5 shadow-[0_1px_2px_rgba(0,0,0,0.25)]">
        <button type="button" aria-label="Emoji" className="shrink-0">
          <svg viewBox="0 0 114 114" className="size-[38px] fill-none stroke-[#7d8489]" strokeWidth="7">
            <circle cx="57" cy="57" r="52" />
            <ellipse cx="42" cy="43" rx="8" ry="11" className="fill-[#7d8489] stroke-none" />
            <ellipse cx="73" cy="43" rx="8" ry="11" className="fill-[#7d8489] stroke-none" />
            <path d="M30 66q27 10 55 0-4 22-27 23-24-2-28-23z" strokeWidth="5" />
            <path d="M32 68h50l-5 10q-20 5-40 0z" className="fill-[#7d8489] stroke-none" />
          </svg>
        </button>
        <span aria-hidden="true" className="ml-[19px] h-12 w-1 shrink-0 bg-[#128071]" />
        <input
          type="text"
          aria-label="Message"
          placeholder="Type a message"
          className="min-w-0 flex-1 bg-transparent text-[35px] text-[#161616] outline-none placeholder:text-[#9c9ea0]"
        />
        <button type="button" aria-label="Attach" className="mr-[42px] shrink-0">
          <svg viewBox="0 0 114 102" className="h-[34px] w-[38px] fill-none stroke-[#84898d]" strokeWidth="7">
            <path d="M60 8l43 45q12 16-1 31-16 15-33 3L11 36Q-1 22 9 11 22-1 37 11l43 40q9 10 1 18-10 7-20-2L33 40" />
          </svg>
        </button>
        <button type="button" aria-label="Camera" className="shrink-0">
          <svg viewBox="0 0 108 100" className="h-[34px] w-9">
            <path d="M30 12L38 3q3-3 7-3h18q4 0 7 3l8 9h14q16 0 16 16v56q0 16-16 16H16Q0 100 0 84V28Q0 12 16 12z" fill="#84898d" />
            <circle cx="54" cy="53" r="23" fill="none" stroke="#fff" strokeWidth="7" />
          </svg>
        </button>
      </div>
      <button
        type="button"
        aria-label="Record voice message"
        className="flex size-[84px] shrink-0 items-center justify-center rounded-full bg-[#00897b] text-white shadow-[0_1px_3px_rgba(0,0,0,0.3)]"
      >
        <MdMic className="size-[45px]" />
      </button>
    </form>
  );
}

export default function App() {
  return (
    <div className="min-h-screen bg-white pt-[9px] pr-[18px] pb-[11px] pl-3 font-['Roboto',sans-serif]">
      <Header />
      <main className="relative bg-linear-to-b from-[#ebe9e7] via-[#eee6de] to-[#f0e5e0]">
        <Wallpaper />
        <section className="relative">
          <ol className="pr-[30px] pl-[31px]">
            {messages.map((message, i) => (
              <Bubble key={message.id} message={message} first={i === 0} />
            ))}
          </ol>
          {/* Floats over the newest message */}
          <button
            aria-label="Scroll to latest"
            className="absolute right-5 bottom-[27px] flex size-[58px] items-center justify-center rounded-full bg-[#f8faf6]/95 shadow-[0_1px_2px_rgba(0,0,0,0.15)]"
          >
            <svg viewBox="0 0 22 20" className="mt-1 h-5 w-[22px] fill-none stroke-[#616161]" strokeWidth="3">
              <path d="M1 1l10 8L21 1M1 10l10 8 10-8" />
            </svg>
          </button>
        </section>
        <Composer />
      </main>
    </div>
  );
}
